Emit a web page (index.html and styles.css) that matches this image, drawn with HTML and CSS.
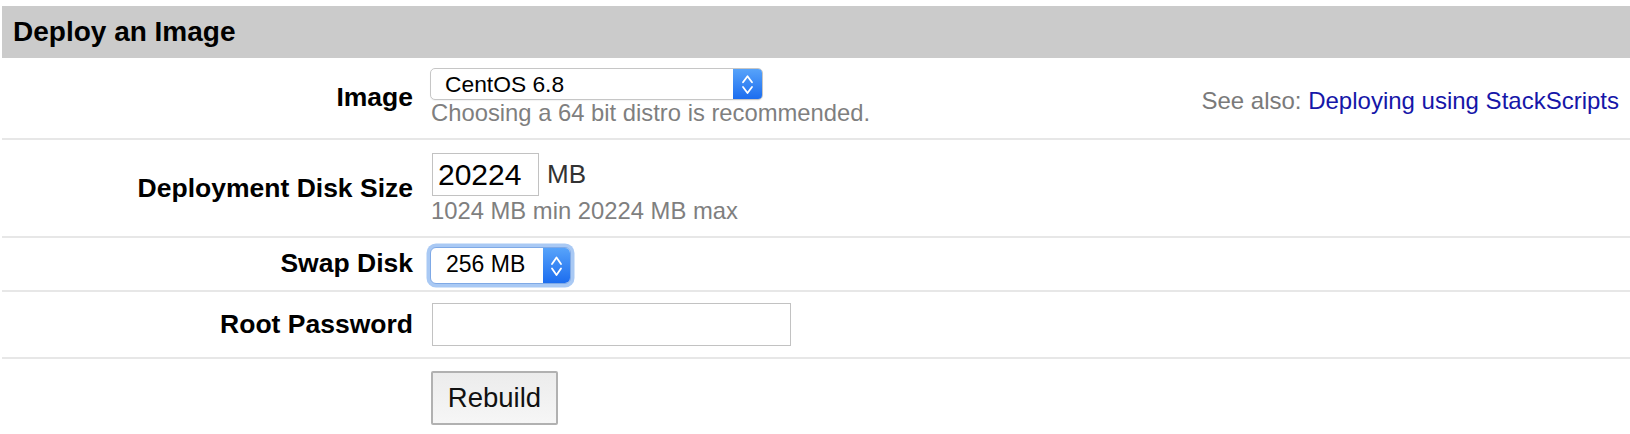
FILE: index.html
```html
<!DOCTYPE html>
<html lang="en">
<head>
<meta charset="utf-8">
<title>Deploy an Image</title>
<link rel="stylesheet" href="styles.css">
</head>
<body>
<div class="panel">
  <div class="panel-head">Deploy an Image</div>

  <div class="row row-image">
    <div class="label">Image</div>
    <div class="field">
      <div class="select select-image">
        <span class="select-value">CentOS 6.8</span>
        <span class="select-arrow">
          <svg width="29" height="32" viewBox="0 0 29 32"><path d="M10 14.3 L14.5 8.3 L19 14.3 M10 19 L14.5 25 L19 19" fill="none" stroke="#fff" stroke-width="1.8" stroke-linecap="round" stroke-linejoin="round"/></svg>
        </span>
      </div>
      <div class="hint">Choosing a 64 bit distro is recommended.</div>
    </div>
    <div class="aside">See also: <a href="#">Deploying using StackScripts</a></div>
  </div>

  <div class="row row-disk">
    <div class="label">Deployment Disk Size</div>
    <div class="field">
      <div class="disk-line">
        <input class="disk-input" type="text" value="20224">
        <span class="unit">MB</span>
      </div>
      <div class="hint hint-disk">1024 MB min 20224 MB max</div>
    </div>
  </div>

  <div class="row row-swap">
    <div class="label">Swap Disk</div>
    <div class="field">
      <div class="select select-swap">
        <span class="select-value">256 MB</span>
        <span class="select-arrow">
          <svg width="27" height="35" viewBox="0 0 27 35"><path d="M9 16 L13.5 9.5 L18 16 M9 20.5 L13.5 27 L18 20.5" fill="none" stroke="#fff" stroke-width="1.8" stroke-linecap="round" stroke-linejoin="round"/></svg>
        </span>
      </div>
    </div>
  </div>

  <div class="row row-password">
    <div class="label">Root Password</div>
    <div class="field">
      <input class="password-input" type="password" value="">
    </div>
  </div>

  <div class="row row-submit">
    <div class="label"></div>
    <div class="field">
      <button class="btn" type="button">Rebuild</button>
    </div>
  </div>
</div>
</body>
</html>
```

FILE: styles.css
```css
html, body {
  margin: 0;
  padding: 0;
  background: #fff;
}

body {
  font-family: "Liberation Sans", Arial, Helvetica, sans-serif;
  color: #000;
  overflow: hidden;
}

.panel {
  margin: 6px 0 0 2px;
}

.panel-head {
  height: 52px;
  line-height: 52px;
  background: #cbcbcb;
  padding-left: 11px;
  font-size: 28px;
  font-weight: bold;
  color: #000;
}

.row {
  display: grid;
  grid-template-columns: 411px 1fr auto;
  column-gap: 17px;
  align-items: center;
  border-bottom: 2px solid #e7e7e7;
}

.label {
  text-align: right;
  font-size: 26.5px;
  font-weight: bold;
  color: #000;
}

.field {
  min-width: 0;
}

.aside {
  align-self: start;
  padding-top: 19px;
  padding-right: 11px;
  font-size: 24px;
  color: #7a7a7a;
  white-space: nowrap;
}

.aside a {
  color: #1616a8;
  text-decoration: none;
}

.hint {
  font-size: 23.8px;
  line-height: 26px;
  color: #7f7f7f;
  padding-left: 1px;
}

/* Row 1 */
.row-image {
  padding: 10px 0 12px;
}

.select {
  display: flex;
  align-items: stretch;
  box-sizing: border-box;
  background: #fff;
  border-radius: 5px;
  overflow: hidden;
}

.select-value {
  flex: 1;
  display: flex;
  align-items: center;
  color: #000;
  white-space: nowrap;
}

.select-arrow {
  display: flex;
  align-items: center;
  justify-content: center;
  background: linear-gradient(#57a3fa, #1c6def);
}

.select-image {
  width: 333px;
  height: 32px;
  border: 1px solid #c6c6c6;
  box-shadow: 0 1px 1px rgba(0, 0, 0, 0.05);
}

.select-image .select-value {
  padding-left: 14px;
  font-size: 22.8px;
}

.select-image .select-arrow {
  width: 29px;
}

/* Row 2 */
.row-disk {
  padding: 13px 0 12px;
}

.disk-line {
  display: flex;
  align-items: center;
  gap: 8px;
}

.disk-input {
  box-sizing: border-box;
  width: 107px;
  height: 43px;
  margin: 0 0 0 2px;
  padding: 0 5px;
  border: 1px solid #c2c2c2;
  border-radius: 0;
  font-family: "Liberation Sans", Arial, Helvetica, sans-serif;
  font-size: 30px;
  color: #000;
  background: #fff;
  outline: none;
}

.unit {
  font-size: 26px;
  color: #333;
}

.hint-disk {
  margin-top: 2px;
}

/* Row 3 */
.row-swap {
  padding: 9px 0 6px;
}

.row-swap .label {
  padding-bottom: 5px;
}

.select-swap {
  width: 141px;
  height: 37px;
  border: 1px solid #7fa9e6;
  border-radius: 6px;
  box-shadow: 0 0 0 3.5px #a9c9f4;
}

.select-swap .select-value {
  padding-left: 15px;
  padding-bottom: 2px;
  font-size: 23px;
}

.select-swap .select-arrow {
  width: 27px;
}

/* Row 4 */
.row-password {
  padding: 11px 0 11px;
}

.password-input {
  display: block;
  box-sizing: border-box;
  width: 359px;
  height: 43px;
  margin: 0 0 0 2px;
  padding: 0 6px;
  border: 1px solid #c2c2c2;
  border-radius: 0;
  background: #fff;
  outline: none;
}

/* Row 5 */
.row-submit {
  border-bottom: none;
  padding: 12px 0 20px;
}

.btn {
  display: block;
  box-sizing: border-box;
  width: 127px;
  height: 54px;
  margin-left: 1px;
  border: 2px solid #b1b1b1;
  border-radius: 2px;
  background: linear-gradient(#ececec, #f6f6f6);
  font-family: "Liberation Sans", Arial, Helvetica, sans-serif;
  font-size: 27.5px;
  color: #111;
  padding: 0;
}
```
